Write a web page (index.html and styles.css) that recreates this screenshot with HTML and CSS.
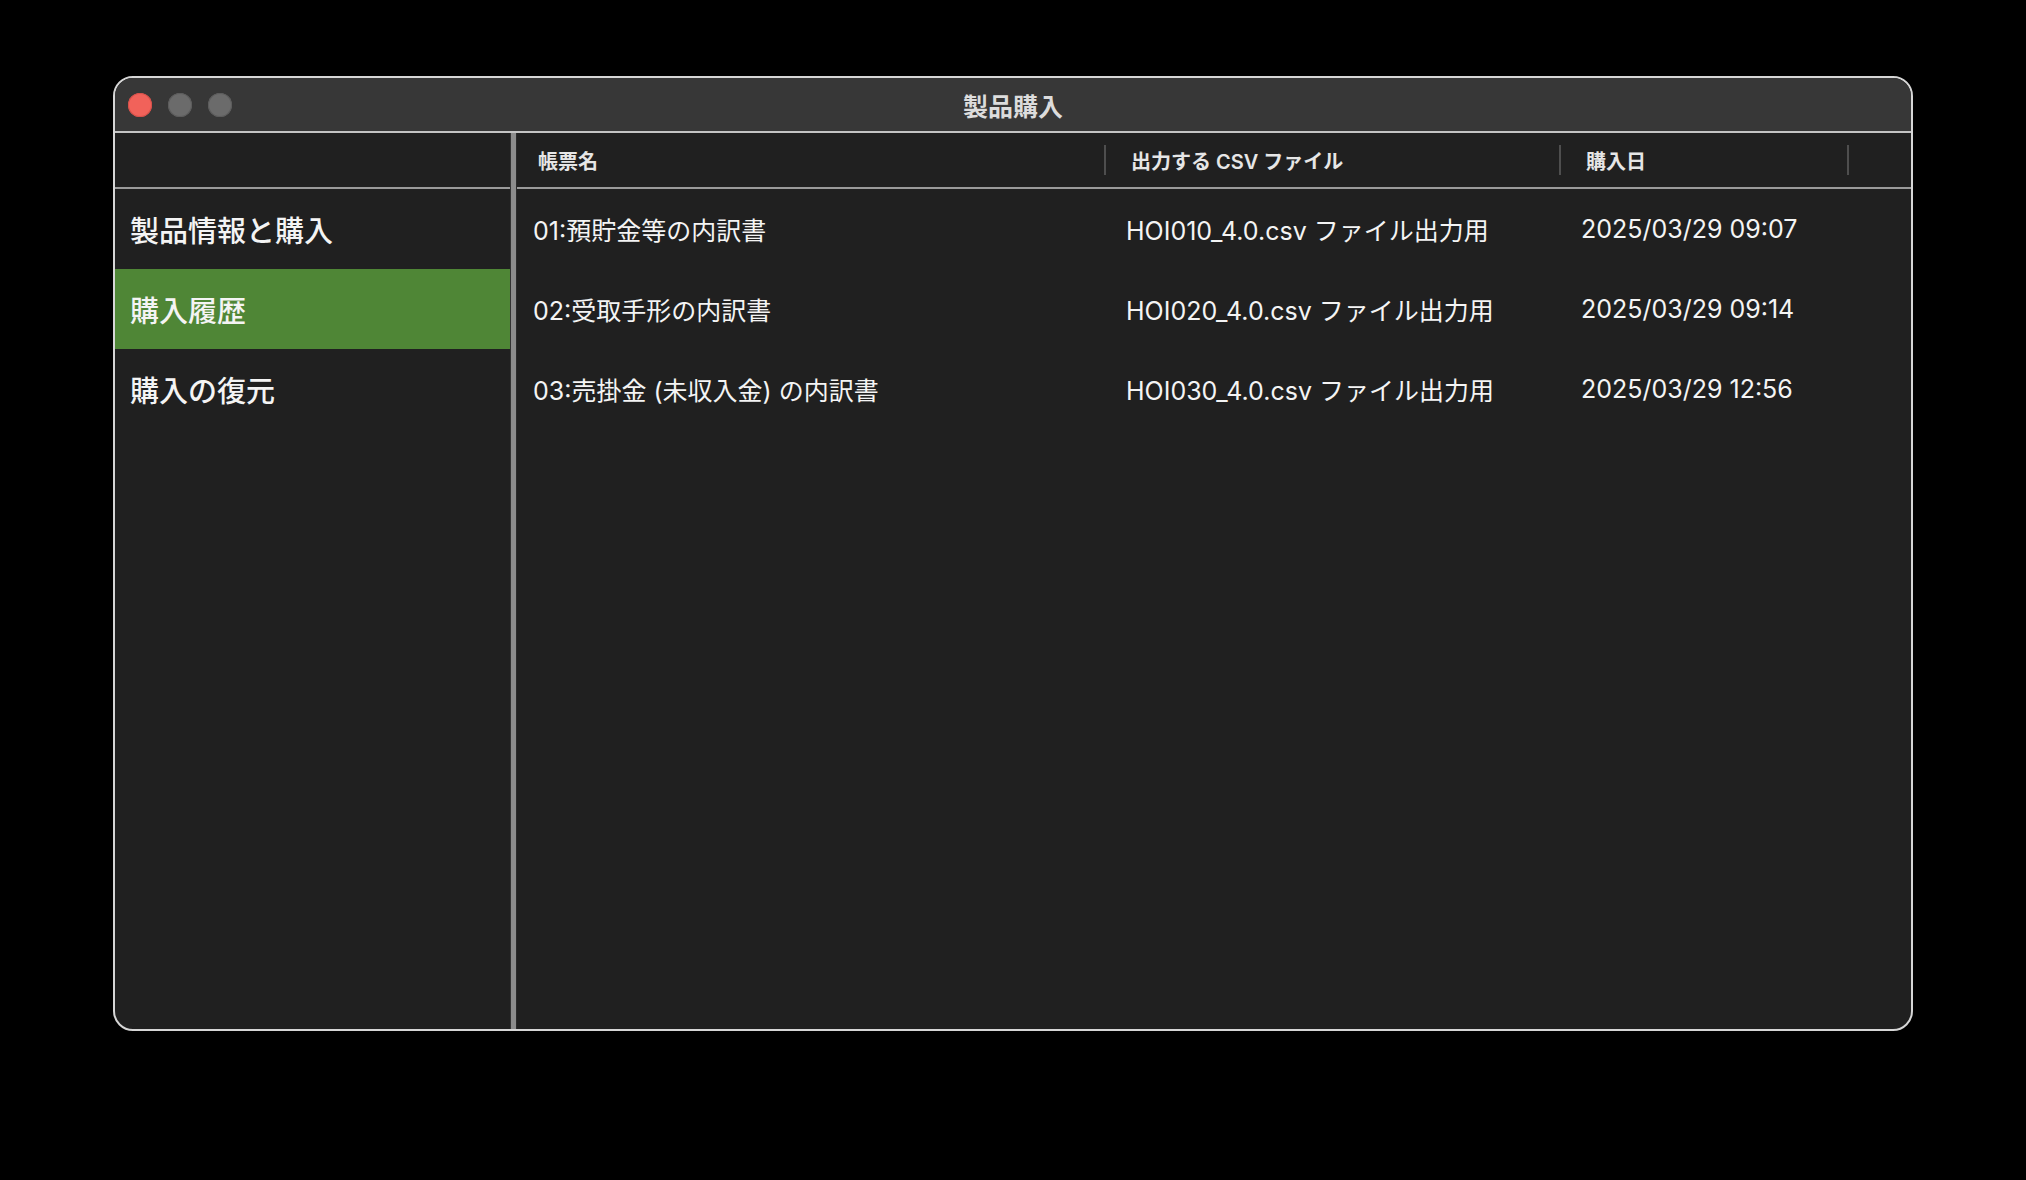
FILE: index.html
```html
<!DOCTYPE html>
<html lang="ja">
<head>
    <meta charset="UTF-8">
    <meta name="viewport" content="width=device-width, initial-scale=1.0">
    <title>製品購入</title>
    <link rel="stylesheet" href="styles.css">
</head>
<body>
    <div class="window">
        <div class="titlebar">
            <div class="lights">
                <span class="light close"></span>
                <span class="light"></span>
                <span class="light"></span>
            </div>
            <div class="title">製品購入</div>
            <div></div>
        </div>
        <div class="body">
            <aside class="sidebar">
                <div class="side-head"></div>
                <div class="side-item">製品情報と購入</div>
                <div class="side-item active">購入履歴</div>
                <div class="side-item">購入の復元</div>
            </aside>
            <div class="divider"></div>
            <main class="main">
                <div class="thead">
                    <div class="th">帳票名</div>
                    <div class="th">出力する CSV ファイル</div>
                    <div class="th">購入日</div>
                    <div></div>
                </div>
                <div class="tr">
                    <div class="td">01:預貯金等の内訳書</div>
                    <div class="td">HOI010_4.0.csv ファイル出力用</div>
                    <div class="td">2025/03/29 09:07</div>
                </div>
                <div class="tr">
                    <div class="td">02:受取手形の内訳書</div>
                    <div class="td">HOI020_4.0.csv ファイル出力用</div>
                    <div class="td">2025/03/29 09:14</div>
                </div>
                <div class="tr">
                    <div class="td">03:売掛金 (未収入金) の内訳書</div>
                    <div class="td">HOI030_4.0.csv ファイル出力用</div>
                    <div class="td">2025/03/29 12:56</div>
                </div>
            </main>
        </div>
    </div>
</body>
</html>
```

FILE: styles.css
```css
html, body {
    margin: 0;
    height: 100%;
}
body {
    background-color: #000;
    font-family: 'Inter', 'Noto Sans CJK JP', sans-serif;
    color: #f2f2f2;
    padding: 76px 0 0 113px;
    box-sizing: border-box;
}
.window {
    width: 1800px;
    height: 955px;
    box-sizing: border-box;
    border: 2px solid #d6d6d6;
    border-radius: 20px;
    overflow: hidden;
    background-color: #202020;
    display: flex;
    flex-direction: column;
}
.titlebar {
    height: 53px;
    background-color: #373737;
    border-bottom: 2px solid #c4c4c4;
    display: grid;
    grid-template-columns: 1fr auto 1fr;
    align-items: center;
}
.lights {
    display: flex;
    gap: 16px;
    padding-left: 13px;
}
.light {
    width: 24px;
    height: 24px;
    border-radius: 50%;
    background-color: #6b6b6b;
    box-shadow: inset 0 0 0 1px #5c5c5c;
}
.light.close {
    background-color: #f1625a;
    box-shadow: inset 0 0 0 1px #d6504a;
}
.title {
    font-family: 'Noto Sans CJK JP', sans-serif;
    font-weight: 700;
    font-size: 25px;
    color: #dcdcdc;
}
.body {
    flex: 1;
    display: flex;
}
.sidebar {
    width: 395px;
}
.side-head {
    height: 54px;
    border-bottom: 2px solid #9a9a9a;
}
.side-item {
    height: 80px;
    display: flex;
    align-items: center;
    padding-left: 15px;
    font-family: 'Noto Sans CJK JP', sans-serif;
    font-size: 29px;
    font-weight: 500;
    color: #f4f4f4;
}
.side-item.active {
    background-color: #4f8636;
}
.divider {
    width: 5px;
    background-color: #8c8c8c;
    border-left: 1px solid #333;
    border-right: 1px solid #2a2a2a;
}
.main {
    flex: 1;
}
.thead, .tr {
    display: grid;
    grid-template-columns: 589px 455px 288px 1fr;
    align-items: center;
}
.thead {
    height: 54px;
    border-bottom: 2px solid #9a9a9a;
}
.th {
    height: 30px;
    display: flex;
    align-items: center;
    padding-left: 25px;
    border-right: 2px solid #4e4e4e;
    font-size: 20px;
    font-weight: 600;
    color: #e6e6e6;
}
.th:first-child {
    padding-left: 21px;
}
.tr {
    height: 80px;
}
.td {
    padding-left: 20px;
    font-size: 25px;
    color: #f4f4f4;
    white-space: nowrap;
}
.td:first-child {
    padding-left: 16px;
}
```
